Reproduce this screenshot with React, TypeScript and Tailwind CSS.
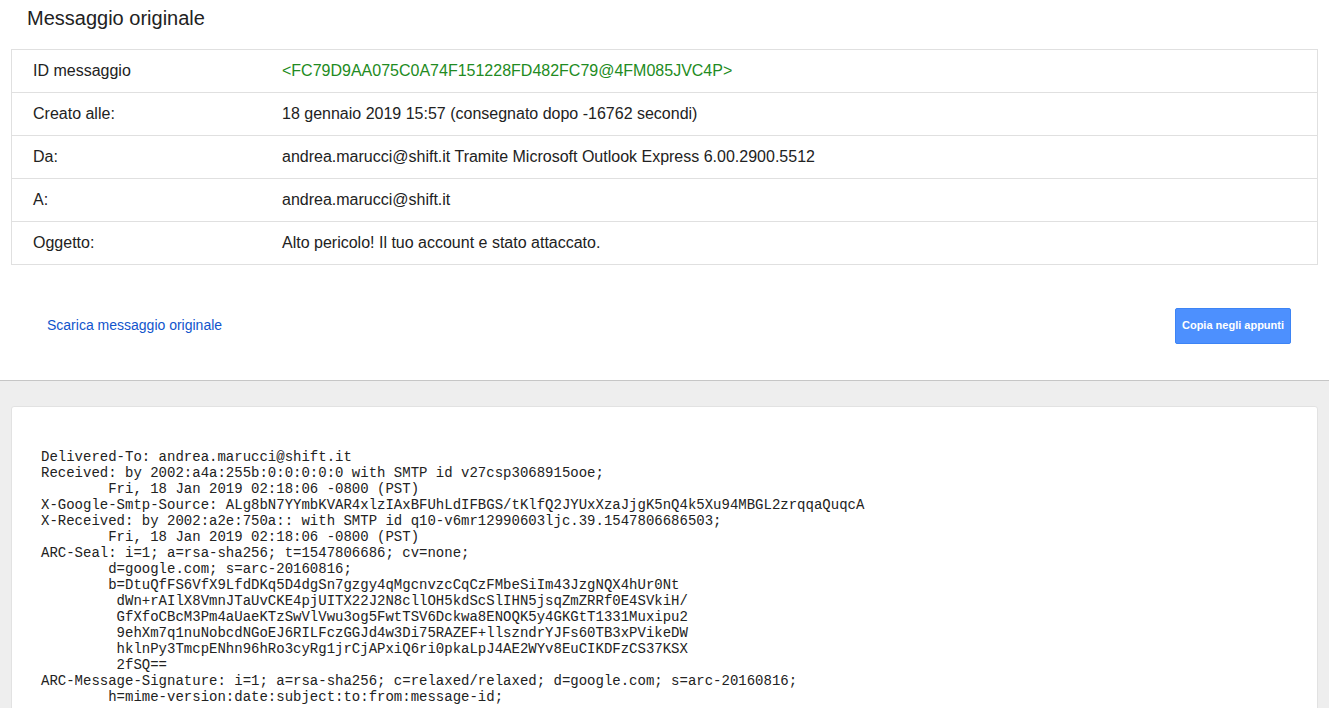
import React from "react";

const rows: { label: string; value: string; green?: boolean }[] = [
  { label: "ID messaggio", value: "<FC79D9AA075C0A74F151228FD482FC79@4FM085JVC4P>", green: true },
  { label: "Creato alle:", value: "18 gennaio 2019 15:57 (consegnato dopo -16762 secondi)" },
  { label: "Da:", value: "andrea.marucci@shift.it Tramite Microsoft Outlook Express 6.00.2900.5512" },
  { label: "A:", value: "andrea.marucci@shift.it" },
  { label: "Oggetto:", value: "Alto pericolo! Il tuo account e stato attaccato." },
];

const raw = [
  "Delivered-To: andrea.marucci@shift.it",
  "Received: by 2002:a4a:255b:0:0:0:0:0 with SMTP id v27csp3068915ooe;",
  "        Fri, 18 Jan 2019 02:18:06 -0800 (PST)",
  "X-Google-Smtp-Source: ALg8bN7YYmbKVAR4xlzIAxBFUhLdIFBGS/tKlfQ2JYUxXzaJjgK5nQ4k5Xu94MBGL2zrqqaQuqcA",
  "X-Received: by 2002:a2e:750a:: with SMTP id q10-v6mr12990603ljc.39.1547806686503;",
  "        Fri, 18 Jan 2019 02:18:06 -0800 (PST)",
  "ARC-Seal: i=1; a=rsa-sha256; t=1547806686; cv=none;",
  "        d=google.com; s=arc-20160816;",
  "        b=DtuQfFS6VfX9LfdDKq5D4dgSn7gzgy4qMgcnvzcCqCzFMbeSiIm43JzgNQX4hUr0Nt",
  "         dWn+rAIlX8VmnJTaUvCKE4pjUITX22J2N8cllOH5kdScSlIHN5jsqZmZRRf0E4SVkiH/",
  "         GfXfoCBcM3Pm4aUaeKTzSwVlVwu3og5FwtTSV6Dckwa8ENOQK5y4GKGtT1331Muxipu2",
  "         9ehXm7q1nuNobcdNGoEJ6RILFczGGJd4w3Di75RAZEF+llszndrYJFs60TB3xPVikeDW",
  "         hklnPy3TmcpENhn96hRo3cyRg1jrCjAPxiQ6ri0pkaLpJ4AE2WYv8EuCIKDFzCS37KSX",
  "         2fSQ==",
  "ARC-Message-Signature: i=1; a=rsa-sha256; c=relaxed/relaxed; d=google.com; s=arc-20160816;",
  "        h=mime-version:date:subject:to:from:message-id;",
].join("\n");

export default function App() {
  return (
    <div className="min-h-screen bg-white text-[#222] font-['Liberation_Sans',Arial,sans-serif]">
      <div className="h-[49px] pl-[27px] pt-[4px] text-[20px] leading-[28px] text-[#222]">
        Messaggio originale
      </div>
      <div className="mx-[11px] border border-[#e0e0e0]">
        {rows.map((r, i) => (
          <div
            key={r.label}
            className={`flex items-center text-[16px] ${i > 0 ? "h-[43px] border-t border-[#e0e0e0]" : "h-[42px]"}`}
          >
            <div className="w-[270px] shrink-0 pl-[21px]">{r.label}</div>
            <div className={r.green ? "text-[#228b22]" : ""}>{r.value}</div>
          </div>
        ))}
      </div>
      <div className="flex h-[115px] items-center justify-between pl-[47px] pr-[38px] pt-[6px]">
        <a className="text-[14px] text-[#1155cc] cursor-pointer">Scarica messaggio originale</a>
        <button className="h-[36px] w-[116px] rounded-[2px] border border-[#3d84f5] bg-[#4d90fe] text-[11px] font-bold text-white">
          Copia negli appunti
        </button>
      </div>
      <div className="border-t border-[#c6c6c6] bg-[#eeeeee] px-[11px] pt-[25px] pb-[20px]">
        <div className="rounded-[3px] border border-[#e2e2e2] bg-white pl-[29px] pt-[42px] pb-[20px]">
          <pre className="m-0 whitespace-pre font-['Liberation_Mono','Courier_New',monospace] text-[14px] leading-[16px] text-[#222]">
            {raw}
          </pre>
        </div>
      </div>
    </div>
  );
}
